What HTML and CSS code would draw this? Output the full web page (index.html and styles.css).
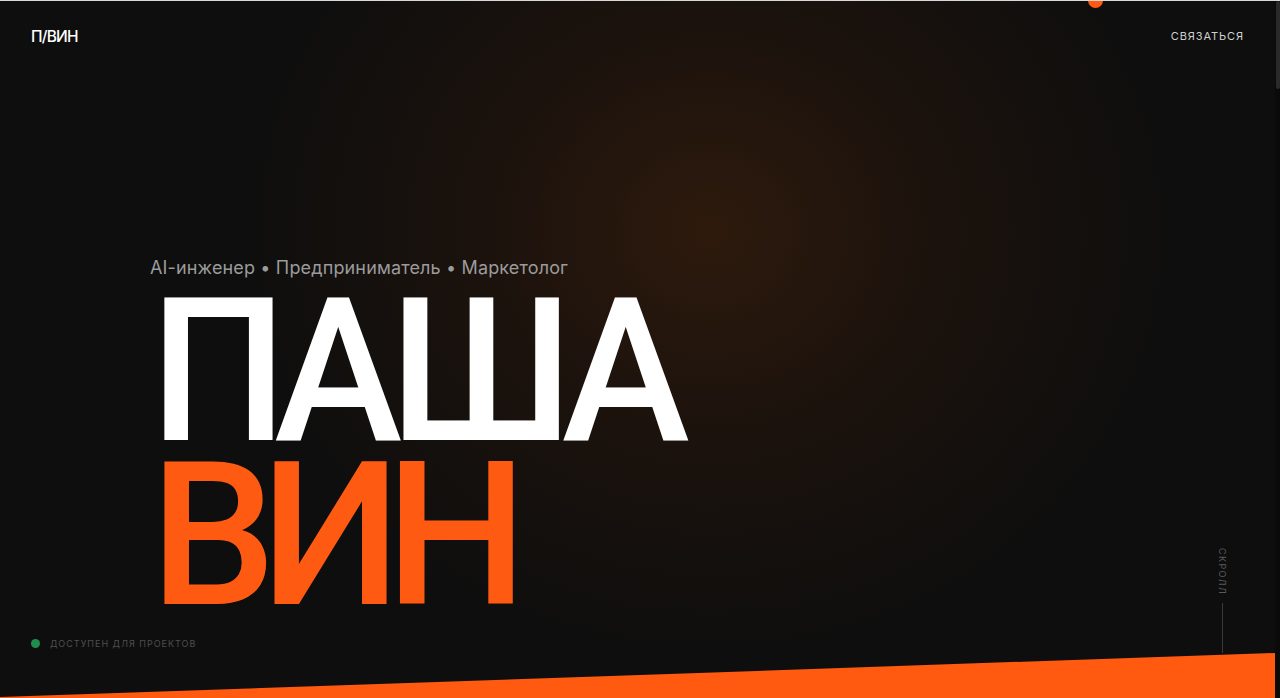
FILE: index.html
```html
<!DOCTYPE html>
<html lang="ru">
<head>
<meta charset="utf-8">
<title>Паша Вин</title>
<link rel="stylesheet" href="styles.css">
</head>
<body>
<div class="page">
  <div class="glow"></div>
  <span class="dot-top"></span>
  <header class="header">
    <a class="logo" href="#">П/ВИН</a>
    <a class="contact" href="#">СВЯЗАТЬСЯ</a>
  </header>
  <main class="hero">
    <div class="intro">
      <p class="roles">AI-инженер • Предприниматель • Маркетолог</p>
      <h1 class="name"><span class="first">ПАША</span><span class="last">ВИН</span></h1>
    </div>
    <div class="scroll">
      <span class="scroll-text">СКРОЛЛ</span>
      <span class="scroll-line"></span>
    </div>
  </main>
  <footer class="footer">
    <span class="status-dot"></span>
    <span class="status-text">ДОСТУПЕН ДЛЯ ПРОЕКТОВ</span>
  </footer>
  <div class="band"></div>
  <div class="scrollbar"><span class="thumb"></span></div>
</div>
</body>
</html>
```
FILE: styles.css
```css
* { box-sizing: border-box; }
html, body { margin: 0; padding: 0; background: #0e0e0e; }
body { font-family: Inter, "Noto Sans", sans-serif; color: #fff; }
a { text-decoration: none; color: inherit; }

.page {
  position: relative;
  width: 1280px;
  height: 698px;
  overflow: hidden;
  background: #0e0e0e;
  border-top: 1px solid #d9d9d9;
  display: flex;
  flex-direction: column;
}
.glow {
  position: absolute;
  left: 230px; top: -210px;
  width: 960px; height: 880px;
  background: radial-gradient(ellipse at center, rgba(72,36,12,0.55) 0%, rgba(52,26,10,0.36) 32%, rgba(14,14,14,0) 70%);
  pointer-events: none;
}
.dot-top {
  position: absolute;
  left: 1088px; top: -8px;
  width: 15px; height: 15px;
  border-radius: 50%;
  background: #ff5a12;
}
.header {
  position: relative;
  flex-shrink: 0;
  display: flex;
  justify-content: space-between;
  align-items: center;
  padding: 0 36px 0 31px;
  height: 70px;
}
.logo { font-size: 15.5px; font-weight: 500; letter-spacing: -0.8px; color: #fff; }
.contact { font-size: 11px; letter-spacing: 0.9px; color: #d0d0d0; font-weight: 400; }

.hero {
  position: relative;
  flex-shrink: 0;
  display: flex;
  justify-content: space-between;
  align-items: flex-start;
  padding: 0 52px 0 150px;
  margin-top: 186px;
}
.intro { display: flex; flex-direction: column; align-items: flex-start; }
.roles {
  margin: 0 0 11px 0;
  font-size: 18px;
  line-height: 22px;
  color: #9b9b9b;
  font-weight: 400;
  letter-spacing: 0.15px;
}
.name {
  margin: 0;
  display: flex;
  flex-direction: column;
  align-items: flex-start;
  font-family: Roboto, Inter, sans-serif;
  font-size: 200px;
  line-height: 164px;
  font-weight: 500;
  letter-spacing: -0.08em;
}
.first {
  color: #fff;
  letter-spacing: -0.066em;
  transform: scaleX(0.965);
  transform-origin: left center;
}
.last { color: #ff5a12; }

.scroll {
  display: flex;
  flex-direction: column;
  align-items: center;
  gap: 8px;
  margin-top: 291px;
  margin-bottom: -60px;
}
.scroll-text {
  writing-mode: vertical-rl;
  font-size: 9px;
  letter-spacing: 1.4px;
  color: #5a5a5a;
}
.scroll-line { width: 1px; height: 50px; background: #3a3a3a; }

.footer {
  position: relative;
  display: flex;
  align-items: center;
  gap: 10px;
  padding: 0 0 0 31px;
  height: 20px;
  margin-top: auto;
  margin-bottom: 45px;
}
.status-dot { width: 9px; height: 9px; border-radius: 50%; background: #1c8f4c; }
.status-text { font-size: 9px; letter-spacing: 1px; color: #4e4e4e; }

.band {
  position: absolute;
  left: 0; bottom: 0;
  width: 1275px; height: 46px;
  background: #ff5a0f;
  clip-path: polygon(0 100%, 0 45px, 100% 1px, 100% 100%);
}
.scrollbar {
  position: absolute;
  right: 0; top: 0;
  width: 5px; height: 100%;
  background: #0a0a0a;
}
.thumb { display: block; width: 4px; height: 88px; margin-left: 1px; background: #2a2a2a; border-radius: 2px; }
```
